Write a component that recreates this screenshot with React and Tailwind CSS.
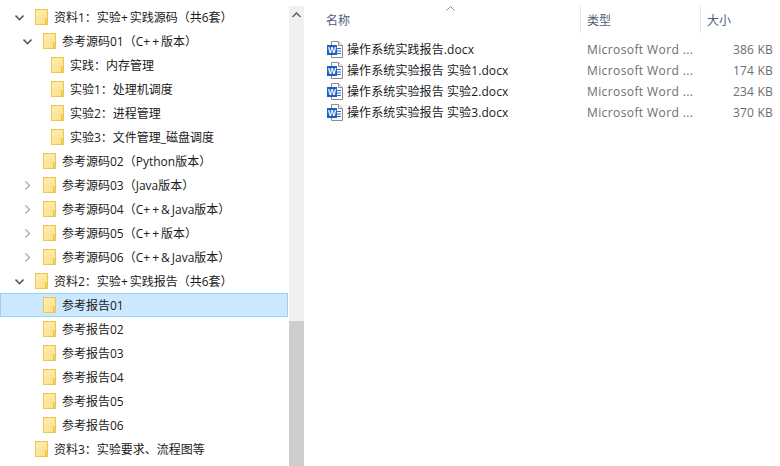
import React from 'react';

const FONT = "font-['Open_Sans','Noto_Sans_CJK_SC',sans-serif]";

const tree = [
  { label: '资料1：实验+实践源码（共6套）', level: 0, arrow: true },
  { label: '参考源码01（C++版本）', level: 1, arrow: 'open' },
  { label: '实践：内存管理', level: 2 },
  { label: '实验1：处理机调度', level: 2 },
  { label: '实验2：进程管理', level: 2 },
  { label: '实验3：文件管理_磁盘调度', level: 2 },
  { label: '参考源码02（Python版本）', level: 1 },
  { label: '参考源码03（Java版本）', level: 1, arrow: 'closed' },
  { label: '参考源码04（C++&Java版本）', level: 1, arrow: 'closed' },
  { label: '参考源码05（C++版本）', level: 1, arrow: 'closed' },
  { label: '参考源码06（C++&Java版本）', level: 1, arrow: 'closed' },
  { label: '资料2：实验+实践报告（共6套）', level: 0, arrow: true },
  { label: '参考报告01', level: 1, selected: true },
  { label: '参考报告02', level: 1 },
  { label: '参考报告03', level: 1 },
  { label: '参考报告04', level: 1 },
  { label: '参考报告05', level: 1 },
  { label: '参考报告06', level: 1 },
  { label: '资料3：实验要求、流程图等', level: 0 },
];

const files = [
  { name: '操作系统实践报告.docx', size: '386 KB' },
  { name: '操作系统实验报告 实验1.docx', size: '174 KB' },
  { name: '操作系统实验报告 实验2.docx', size: '234 KB' },
  { name: '操作系统实验报告 实验3.docx', size: '370 KB' },
];

const FolderIcon = () => (
  <svg width="13" height="16" viewBox="0 0 13 16" className="shrink-0">
    <defs>
      <linearGradient id="folderFill" x1="0" y1="0" x2="1" y2="1">
        <stop offset="0" stopColor="#fff0b8" />
        <stop offset="1" stopColor="#fcdc7e" />
      </linearGradient>
    </defs>
    <rect x="0.5" y="0.5" width="12" height="15" fill="url(#folderFill)" stroke="#e9c750" />
    <path d="M10.5 15V9.5H12.5V15Z" fill="#f6d670" stroke="#e9c750" strokeWidth="1" />
  </svg>
);

const WordIcon = () => (
  <svg width="16" height="17" viewBox="0 0 16 17" className="shrink-0">
    <path d="M4.5 0.5H11.5L15.5 4.5V16.5H4.5Z" fill="#fff" stroke="#8c8c8c" />
    <path d="M11.5 0.5V4.5H15.5" fill="#f2f2f2" stroke="#8c8c8c" />
    <path d="M10 7.5H14M10 10H14M10 12.5H14" stroke="#2b6fc9" strokeWidth="1" />
    <rect x="0" y="4" width="10" height="10" fill="#1f5fbf" />
    <text x="5" y="12" fontSize="8.5" fontWeight="700" fill="#fff" textAnchor="middle" fontFamily="Liberation Sans, sans-serif">W</text>
  </svg>
);

const Chevron = ({ open }) => (
  <svg width="9" height="9" viewBox="0 0 9 9" className="shrink-0">
    {open ? (
      <path d="M0.5 2.5L4.5 6.5L8.5 2.5" fill="none" stroke="#5c5c5c" strokeWidth="1.6" />
    ) : (
      <path d="M2.5 0.5L6.5 4.5L2.5 8.5" fill="none" stroke="#a6a6a6" strokeWidth="1.2" />
    )}
  </svg>
);

// the + and & sit wider in the original than in this font
const Label = ({ text }) => (
  <span className="ml-[6px] pt-[2px] text-xs text-[#1a1a1a] whitespace-nowrap">
    {text.split(/([+&])/).map((part, i) =>
      i % 2 ? (
        <span key={i} className="tracking-[2px]">{part}</span>
      ) : (
        <span key={i}>{part}</span>
      )
    )}
  </span>
);

const TreeRow = ({ item }) => {
  const indent = item.level === 0 ? 'pl-[15px]' : item.level === 1 ? 'pl-[23px]' : 'pl-[31px]';
  return (
    <div
      className={`h-6 mr-px flex items-center ${
        item.selected ? 'bg-[#cce8ff] border border-[#99d1ff] pl-[22px]' : indent
      }`}
    >
      <div className="w-[9px] shrink-0">
        {item.arrow && <Chevron open={item.arrow !== 'closed'} />}
      </div>
      <div className="ml-[11px]">
        <FolderIcon />
      </div>
      <Label text={item.label} />
    </div>
  );
};

const Scrollbar = () => (
  <div className="w-[15px] shrink-0 mt-[6px] bg-[#f0f0f0] flex flex-col">
    <div className="h-[17px] flex items-center justify-center">
      <svg width="9" height="6" viewBox="0 0 9 6">
        <path d="M0.5 5L4.5 1L8.5 5" fill="none" stroke="#606060" strokeWidth="1.5" />
      </svg>
    </div>
    <div className="h-[298px]" />
    <div className="flex-1 bg-[#cdcdcd]" />
  </div>
);

const App = () => {
  return (
    <div className={`w-[780px] h-[466px] overflow-hidden bg-white flex ${FONT}`}>
      <div className="w-[289px] shrink-0 pt-[5px] overflow-hidden">
        {tree.map((item) => (
          <TreeRow key={item.label} item={item} />
        ))}
      </div>
      <Scrollbar />
      <div className="flex-1 min-w-0">
        <div className="relative h-[27px] mt-[6px] flex text-xs text-[#4c607a]">
          <svg width="9" height="5" viewBox="0 0 9 5" className="absolute left-[142px] top-0">
            <path d="M0.5 4.5L4.5 0.5L8.5 4.5" fill="none" stroke="#8a8a8a" strokeWidth="1" />
          </svg>
          <div className="w-[277px] pl-[22px] pt-[2px] flex items-center border-r border-[#e5e5e5]">名称</div>
          <div className="w-[120px] pl-[6px] pt-[2px] flex items-center border-r border-[#e5e5e5]">类型</div>
          <div className="pl-[6px] pt-[2px] flex items-center">大小</div>
        </div>
        <div className="mt-[6px]">
          {files.map((file) => (
            <div key={file.name} className="h-[21px] flex items-center text-xs">
              <div className="w-[276px] pl-[23px] flex items-center">
                <WordIcon />
                <span className="ml-1 pt-[1px] text-[#1a1a1a] whitespace-nowrap tracking-[0.1px]">{file.name}</span>
              </div>
              <span className="w-[120px] pl-[7px] pt-[1px] text-[#6d6d6d] whitespace-nowrap tracking-[0.4px]">Microsoft Word ...</span>
              <span className="w-[73px] text-right pt-[1px] text-[#6d6d6d] whitespace-nowrap tracking-[0.2px]">{file.size}</span>
            </div>
          ))}
        </div>
      </div>
    </div>
  );
};

export default App;
